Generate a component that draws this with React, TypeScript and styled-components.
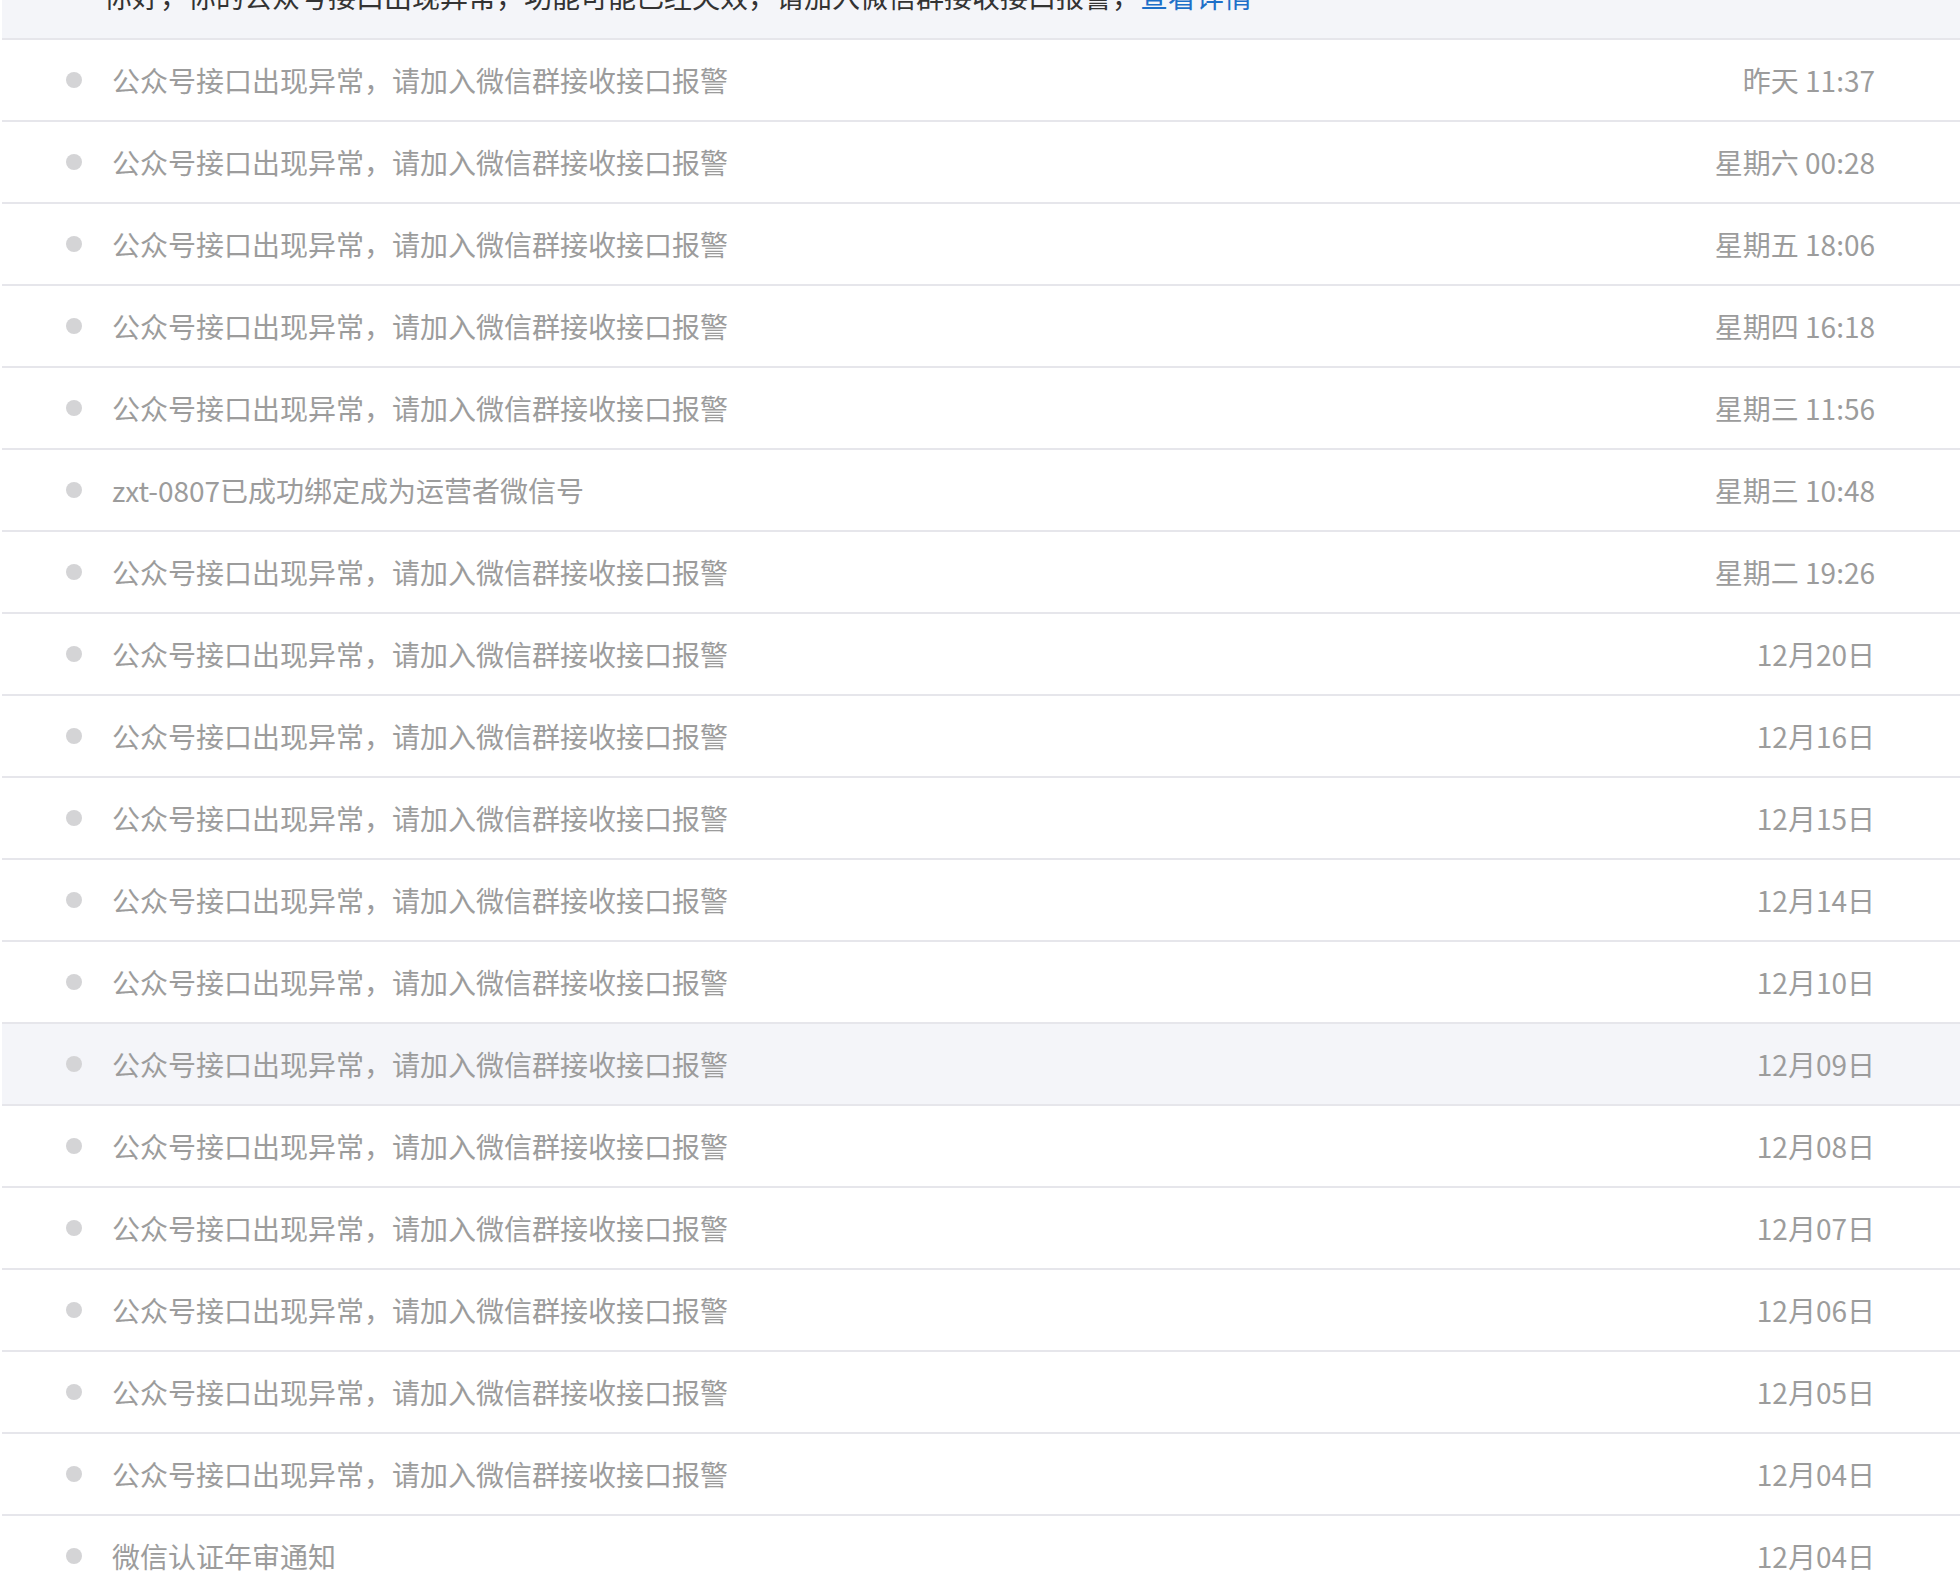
import React from "react";
import styled, { createGlobalStyle } from "styled-components";

const GlobalStyle = createGlobalStyle`
	html, body {
		margin: 0;
		padding: 0;
		background: #ffffff;
		overflow: hidden;
	}
	body {
		font-family: "Noto Sans CJK SC", "Noto Sans", sans-serif;
	}
`;

const Page = styled.div`
	margin-top: -46px;
	margin-left: 2px;
	height: 1620px;
	overflow: hidden;
`;

const Notice = styled.div`
	background: #f4f5f9;
	padding: 24px 0 24px 102px;
	line-height: 36px;
	font-size: 28px;
	color: #333333;
	border-bottom: 2px solid #e6e6eb;
	white-space: nowrap;
`;

const Link = styled.a`
	color: #1e6fc8;
	text-decoration: none;
`;

const Row = styled.div<{ $active?: boolean }>`
	display: flex;
	align-items: center;
	height: 80px;
	padding: 0 85px 0 64px;
	background: ${(p) => (p.$active ? "#f4f5f9" : "#ffffff")};
	border-bottom: 2px solid #e6e6eb;
	font-size: 28px;
	color: #9c9c9c;
`;

const Dot = styled.span`
	width: 16px;
	height: 16px;
	border-radius: 50%;
	background: #d4d4d6;
	flex-shrink: 0;
	margin-right: 30px;
`;

const Title = styled.div`
	flex: 1;
	white-space: nowrap;
`;

const Time = styled.div`
	white-space: nowrap;
`;

const alert = "公众号接口出现异常，请加入微信群接收接口报警";

const messages = [
	{ title: alert, time: "昨天 11:37" },
	{ title: alert, time: "星期六 00:28" },
	{ title: alert, time: "星期五 18:06" },
	{ title: alert, time: "星期四 16:18" },
	{ title: alert, time: "星期三 11:56" },
	{ title: "zxt-0807已成功绑定成为运营者微信号", time: "星期三 10:48" },
	{ title: alert, time: "星期二 19:26" },
	{ title: alert, time: "12月20日" },
	{ title: alert, time: "12月16日" },
	{ title: alert, time: "12月15日" },
	{ title: alert, time: "12月14日" },
	{ title: alert, time: "12月10日" },
	{ title: alert, time: "12月09日", active: true },
	{ title: alert, time: "12月08日" },
	{ title: alert, time: "12月07日" },
	{ title: alert, time: "12月06日" },
	{ title: alert, time: "12月05日" },
	{ title: alert, time: "12月04日" },
	{ title: "微信认证年审通知", time: "12月04日" },
];

export default function App() {
	return (
		<>
			<GlobalStyle />
			<Page>
				<Notice>
					你好，你的公众号接口出现异常，功能可能已经失效，请加入微信群接收接口报警，
					<Link href="#">查看详情</Link>
				</Notice>
				{messages.map((m, i) => (
					<Row key={i} $active={m.active}>
						<Dot />
						<Title>{m.title}</Title>
						<Time>{m.time}</Time>
					</Row>
				))}
			</Page>
		</>
	);
}
